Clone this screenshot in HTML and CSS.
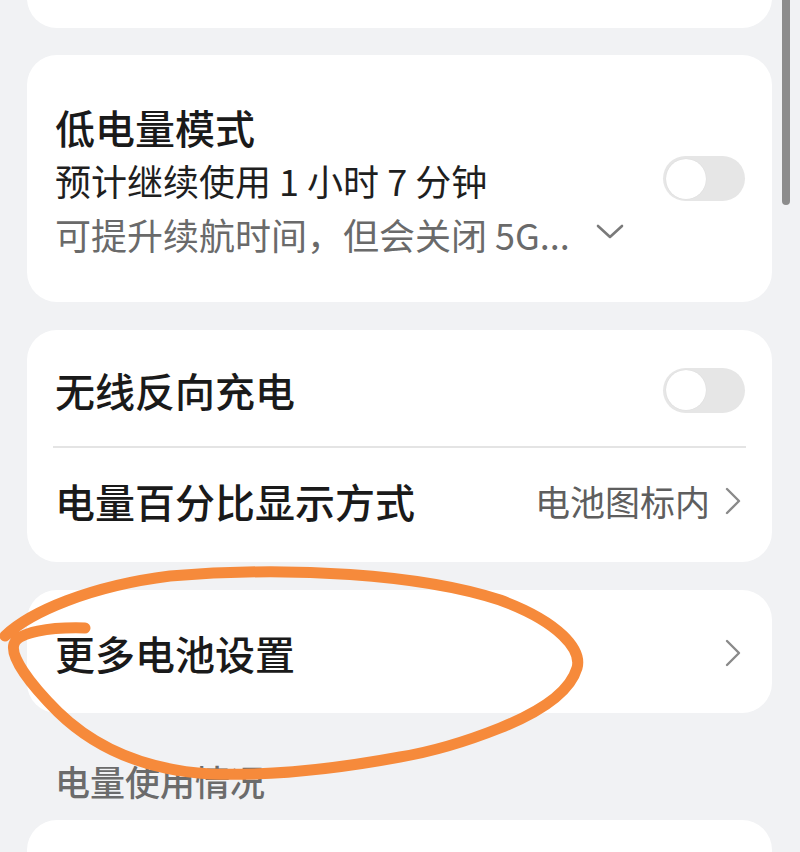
FILE: index.html
```html
<!DOCTYPE html>
<html lang="zh-CN">
<head>
<meta charset="utf-8">
<title>电池</title>
<link rel="stylesheet" href="styles.css">
</head>
<body>
<div class="page">
  <div class="list">
    <div class="card card-top"></div>

    <div class="card card-low">
      <div class="low-text">
        <div class="title">低电量模式</div>
        <div class="sub">预计继续使用 1 小时 7 分钟</div>
        <div class="desc">可提升续航时间，但会关闭 5G...<svg class="chev-down" viewBox="0 0 28 16" width="28" height="16"><path d="M2 2 L14 13 L26 2" fill="none" stroke="#7a7a7a" stroke-width="2.6" stroke-linecap="round" stroke-linejoin="round"/></svg></div>
      </div>
      <div class="toggle"><span class="knob"></span></div>
    </div>

    <div class="card card-group">
      <div class="row">
        <div class="title">无线反向充电</div>
        <div class="toggle"><span class="knob"></span></div>
      </div>
      <div class="divider"></div>
      <div class="row">
        <div class="title">电量百分比显示方式</div>
        <div class="value">电池图标内<svg class="chev-right" viewBox="0 0 16 28" width="16" height="28"><path d="M2 2 L14 14 L2 26" fill="none" stroke="#8a8a8a" stroke-width="2.4" stroke-linecap="round" stroke-linejoin="round"/></svg></div>
      </div>
    </div>

    <div class="card card-more">
      <div class="row row-more">
        <div class="title">更多电池设置</div>
        <svg class="chev-right" viewBox="0 0 16 28" width="16" height="28"><path d="M2 2 L14 14 L2 26" fill="none" stroke="#8a8a8a" stroke-width="2.4" stroke-linecap="round" stroke-linejoin="round"/></svg>
      </div>
    </div>

    <div class="section">电量使用情况</div>

    <div class="card card-bottom"></div>
  </div>

  <div class="scrollbar"></div>

  <svg class="scribble" viewBox="0 0 800 852" width="800" height="852">
    <path d="M5 636 C 30 612, 90 586, 170 576 C 290 566, 420 574, 500 600 C 560 622, 582 650, 577 668 C 570 692, 540 712, 500 728 C 460 744, 430 752, 400 757 C 330 770, 270 776, 210 774 C 145 770, 95 748, 58 712 C 28 682, 10 656, 14 644 C 18 632, 50 627, 85 628" fill="none" stroke="#f68a3b" stroke-width="11" stroke-linecap="round" stroke-linejoin="round"/>
  </svg>
</div>
</body>
</html>
```

FILE: styles.css
```css
html, body {
  margin: 0;
  padding: 0;
}

body {
  background: #f1f2f4;
  font-family: "Noto Sans CJK SC", "Noto Sans", sans-serif;
  color: #1a1a1a;
  overflow: hidden;
}

.page {
  position: relative;
  width: 800px;
  height: 852px;
  overflow: hidden;
}

.list {
  display: flex;
  flex-direction: column;
  padding: 0 28px 0 27px;
}

.card {
  background: #ffffff;
  border-radius: 30px;
  box-sizing: border-box;
}

.card-top {
  height: 70px;
  margin-top: -42px;
}

.card-low {
  margin-top: 27px;
  height: 247px;
  display: flex;
  align-items: center;
  justify-content: space-between;
  padding: 0 27px 0 28px;
}

.low-text {
  display: flex;
  flex-direction: column;
  padding-top: 4px;
}

.title {
  font-size: 40px;
  font-weight: 500;
  line-height: 52px;
  color: #1a1a1a;
  white-space: nowrap;
}

.sub {
  font-size: 36px;
  line-height: 54px;
  color: #1f1f1f;
  white-space: nowrap;
}

.desc {
  font-size: 36px;
  line-height: 54px;
  color: #6a6a6a;
  white-space: nowrap;
  display: flex;
  align-items: center;
}

.chev-down {
  margin-left: 26px;
  margin-top: -4px;
}

.toggle {
  width: 82px;
  height: 45px;
  border-radius: 23px;
  background: #e6e6e6;
  display: flex;
  align-items: center;
  padding-left: 3px;
  box-sizing: border-box;
  flex: none;
}

.knob {
  width: 40px;
  height: 40px;
  border-radius: 50%;
  background: #ffffff;
  box-shadow: 0 0 1px rgba(0, 0, 0, 0.12);
}

.card-group {
  margin-top: 28px;
  height: 232px;
  display: flex;
  flex-direction: column;
}

.row {
  height: 116px;
  display: flex;
  align-items: center;
  justify-content: space-between;
  padding: 4px 27px 0 28px;
  box-sizing: border-box;
}

.divider {
  height: 2px;
  background: #e4e4e4;
  margin: 0 26px;
  flex: none;
}

.row + .divider + .row {
  height: 114px;
  padding: 0 31px 8px 28px;
}

.value {
  display: flex;
  align-items: center;
  font-size: 35px;
  line-height: 52px;
  color: #5e5e5e;
  white-space: nowrap;
}

.value .chev-right {
  margin-left: 15px;
}

.card-more {
  margin-top: 28px;
  height: 123px;
}

.row-more {
  height: 123px;
  padding: 2px 31px 0 28px;
}

.section {
  padding: 45px 0 16px 28px;
  font-size: 35px;
  font-weight: 500;
  line-height: 46px;
  color: #6b6b6b;
}

.card-bottom {
  height: 100px;
}

.scrollbar {
  position: absolute;
  left: 782px;
  top: -10px;
  width: 8px;
  height: 215px;
  border-radius: 4px;
  background: #8c8c8c;
}

.scribble {
  position: absolute;
  left: 0;
  top: 0;
  pointer-events: none;
}
```
